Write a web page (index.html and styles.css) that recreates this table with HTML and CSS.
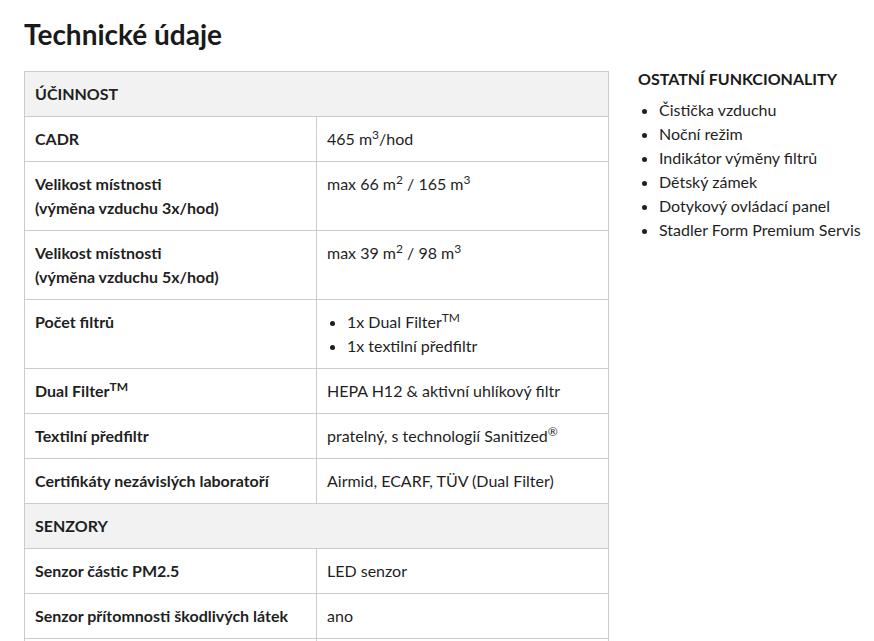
FILE: index.html
```html
<!DOCTYPE html>
<html lang="cs">
<head>
<meta charset="utf-8">
<title>Technické údaje</title>
<link rel="stylesheet" href="styles.css">
</head>
<body>
<div class="page">
  <h1 class="title">Technické údaje</h1>
  <div class="layout">
    <table class="specs">
      <tbody>
        <tr class="section"><th colspan="2">ÚČINNOST</th></tr>
        <tr><td class="label">CADR</td><td class="value">465 m<sup>3</sup>/hod</td></tr>
        <tr><td class="label">Velikost místnosti<br>(výměna vzduchu 3x/hod)</td><td class="value">max 66 m<sup>2</sup> / 165 m<sup>3</sup></td></tr>
        <tr><td class="label">Velikost místnosti<br>(výměna vzduchu 5x/hod)</td><td class="value">max 39 m<sup>2</sup> / 98 m<sup>3</sup></td></tr>
        <tr><td class="label">Počet filtrů</td><td class="value"><ul class="cell-list"><li>1x Dual Filter<sup>TM</sup></li><li>1x textilní předfiltr</li></ul></td></tr>
        <tr><td class="label">Dual Filter<sup>TM</sup></td><td class="value">HEPA H12 &amp; aktivní uhlíkový filtr</td></tr>
        <tr><td class="label">Textilní předfiltr</td><td class="value">pratelný, s technologií Sanitized<sup>®</sup></td></tr>
        <tr><td class="label">Certifikáty nezávislých laboratoří</td><td class="value">Airmid, ECARF, TÜV (Dual Filter)</td></tr>
        <tr class="section"><th colspan="2">SENZORY</th></tr>
        <tr><td class="label">Senzor částic PM2.5</td><td class="value">LED senzor</td></tr>
        <tr><td class="label">Senzor přítomnosti škodlivých látek</td><td class="value">ano</td></tr>
        <tr class="empty"><td class="label"></td><td class="value"></td></tr>
      </tbody>
    </table>
    <aside class="aside">
      <h2 class="aside-title">OSTATNÍ FUNKCIONALITY</h2>
      <ul class="aside-list">
        <li>Čistička vzduchu</li>
        <li>Noční režim</li>
        <li>Indikátor výměny filtrů</li>
        <li>Dětský zámek</li>
        <li>Dotykový ovládací panel</li>
        <li>Stadler Form Premium Servis</li>
      </ul>
    </aside>
  </div>
</div>
</body>
</html>
```

FILE: styles.css
```css
html, body {
  margin: 0;
  padding: 0;
  background: #ffffff;
}
body {
  font-family: Lato, "Open Sans", Arial, sans-serif;
  font-size: 16px;
  line-height: 24px;
  color: #1f1f1f;
}
.page {
  padding: 0 0 0 24px;
}
.title {
  font-size: 28px;
  line-height: 34px;
  font-weight: 700;
  margin: 17px 0 20px;
  color: #1a1a1a;
}
.layout {
  display: flex;
  align-items: flex-start;
  gap: 29px;
}
.specs {
  width: 585px;
  flex: 0 0 585px;
  border-collapse: collapse;
  border: 1px solid #cccccc;
}
.specs th,
.specs td {
  border: 1px solid #cccccc;
  padding: 10px;
  vertical-align: top;
  text-align: left;
}
.section th {
  background: #f2f2f2;
  font-weight: 700;
}
.empty td {
  height: 24px;
}
.label {
  width: 271px;
  font-weight: 700;
}
.value {
  font-weight: 400;
}
sup {
  font-size: 12px;
  line-height: 0;
  vertical-align: 6px;
}
.cell-list {
  margin: 0;
  padding-left: 20px;
}
.aside {
  flex: 0 0 auto;
  white-space: nowrap;
  margin-top: -1px;
}
.aside-title {
  font-size: 16px;
  line-height: 18px;
  font-weight: 700;
  margin: 0 0 10px;
  color: #1a1a1a;
}
.aside-list {
  margin: 0;
  padding-left: 21px;
}
```
